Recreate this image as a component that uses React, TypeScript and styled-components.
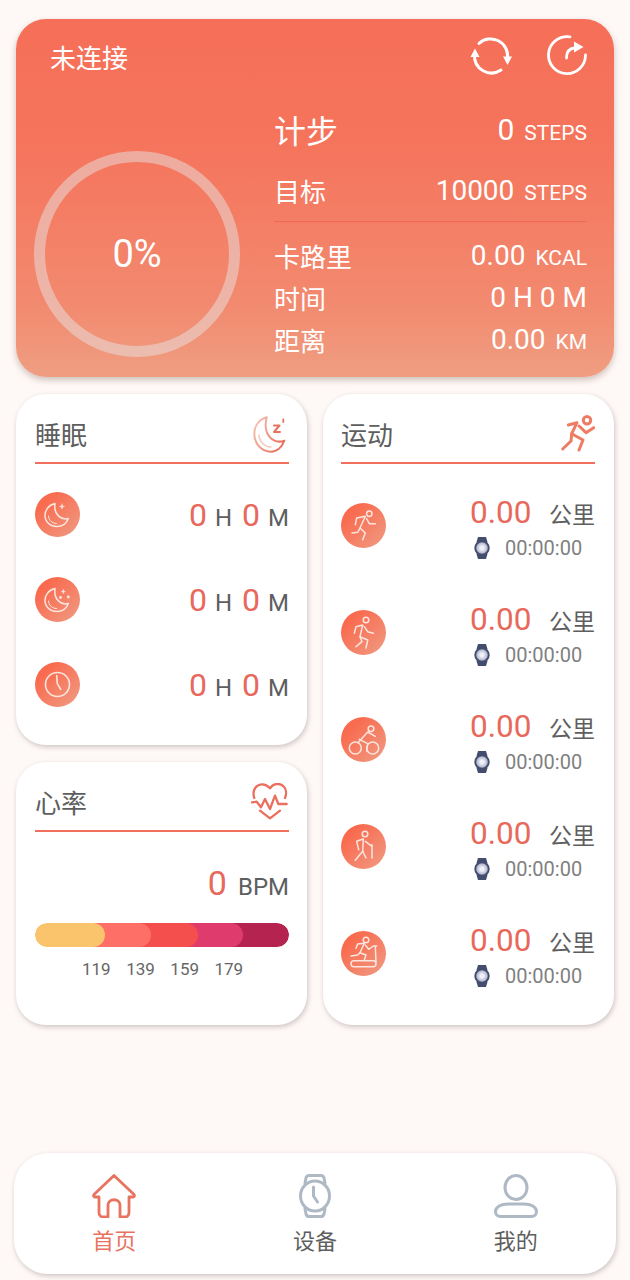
import React from "react";
import styled, { createGlobalStyle } from "styled-components";

const Global = createGlobalStyle`
  html, body { margin: 0; padding: 0; background: #fef8f6; }
  body { font-family: Roboto, "Noto Sans CJK SC", sans-serif; }
  * { box-sizing: border-box; }
`;

const Page = styled.div`
  width: 630px;
  height: 1280px;
  padding: 19px 16px 6px 16px;
  display: flex;
  flex-direction: column;
  background: #fef8f6;
`;

const Hero = styled.section`
  height: 358px;
  border-radius: 30px;
  padding: 16px 27px 0 18px;
  background: linear-gradient(180deg, #f66f58 0%, #f5745c 35%, #f28a6f 80%, #ef9e82 100%);
  box-shadow: 0 3px 6px rgba(120, 90, 80, 0.35);
  color: #fff;
  display: flex;
  flex-direction: column;
`;

const HeroTop = styled.div`
  height: 42px;
  padding-left: 16px;
  display: flex;
  align-items: center;
  justify-content: space-between;
  font-size: 26px;
`;

const HeroIcons = styled.div`
  display: flex;
  gap: 33px;
  margin-right: -1px;
`;

const HeroBody = styled.div`
  flex: 1;
  display: flex;
`;

const RingWrap = styled.div`
  width: 206px;
  height: 206px;
  margin-top: 74px;
  flex: none;
  display: flex;
  align-items: center;
  justify-content: center;
  font-size: 38px;
  border-radius: 50%;
  border: 11px solid rgba(232, 226, 226, 0.5);
`;

const Info = styled.div`
  flex: 1;
  margin-left: 34px;
  padding-top: 24px;
  display: flex;
  flex-direction: column;
`;

const InfoRow = styled.div<{ $h: number; $label: number; $num: number; $mt?: number }>`
  height: ${(p) => p.$h}px;
  margin-top: ${(p) => p.$mt ?? 0}px;
  display: flex;
  align-items: center;
  justify-content: space-between;
  font-size: ${(p) => p.$label}px;
  b {
    font-weight: 400;
    font-size: ${(p) => p.$num}px;
  }
`;

const Unit = styled.span`
  display: inline-block;
  margin-left: 10px;
  font-size: 21px;
  text-transform: uppercase;
`;

const Divider = styled.div`
  height: 1px;
  margin: 1px 0 12px;
  background: #ef6a55;
`;

const Columns = styled.div`
  display: flex;
  gap: 16px;
  margin-top: 17px;
`;

const Stack = styled.div`
  width: 291px;
  display: flex;
  flex-direction: column;
  gap: 17px;
`;

const Card = styled.section<{ $h: number; $left: number; $right: number }>`
  width: 291px;
  height: ${(p) => p.$h}px;
  border-radius: 30px;
  padding: 19px ${(p) => p.$right}px 0 ${(p) => p.$left}px;
  background: #fff;
  box-shadow: 1px 2px 5px rgba(90, 80, 80, 0.3);
`;

const CardHead = styled.div`
  height: 51px;
  display: flex;
  align-items: center;
  justify-content: space-between;
  border-bottom: 2px solid #f0705c;
  font-size: 26px;
  color: #5e5e5e;
  padding-bottom: 8px;
`;

const SleepList = styled.div`
  padding-top: 8px;
`;

const SleepRow = styled.div`
  height: 85px;
  display: flex;
  align-items: center;
  justify-content: space-between;
`;

const Bubble = styled.div`
  width: 45px;
  height: 45px;
  flex: none;
  border-radius: 50%;
  background: linear-gradient(135deg, #f96a4e 20%, #ef9c84 100%);
  display: flex;
  align-items: center;
  justify-content: center;
`;

const Duration = styled.div`
  display: flex;
  align-items: baseline;
  color: #5e5e5e;
  font-size: 24px;
  i {
    font-style: normal;
    font-size: 32px;
    color: #e8695c;
  }
  span {
    margin: 0 10px 0 8px;
  }
  span:last-child {
    margin-right: 0;
  }
`;

const SportList = styled.div`
  padding-top: 8px;
`;

const SportRow = styled.div`
  height: 107px;
  display: flex;
  align-items: center;
  justify-content: space-between;
`;

const SportValue = styled.div`
  width: 125px;
  margin-top: 3px;
  display: flex;
  flex-direction: column;
`;

const Km = styled.div`
  height: 36px;
  display: flex;
  align-items: baseline;
  justify-content: space-between;
  color: #5e5e5e;
  font-size: 23px;
  i {
    font-style: normal;
    font-size: 31.500px;
    color: #e8695c;
  }
`;

const Elapsed = styled.div`
  margin: 5px 0 0 4px;
  height: 26px;
  display: flex;
  align-items: center;
  color: #808080;
  font-size: 20px;
  gap: 15px;
`;

const Bpm = styled.div`
  margin-top: 31px;
  height: 44px;
  display: flex;
  justify-content: flex-end;
  align-items: baseline;
  color: #5e5e5e;
  font-size: 24px;
  i {
    font-style: normal;
    font-size: 34px;
    color: #e8695c;
    margin-right: 11px;
  }
`;

const Zones = styled.div`
  margin-top: 16px;
  height: 24px;
  display: flex;
  border-radius: 12px;
  overflow: hidden;
`;

const Zone = styled.div<{ $c: string; $w: number; $z: number }>`
  width: ${(p) => p.$w}px;
  background: ${(p) => p.$c};
  border-radius: 12px;
  margin-left: -24px;
  position: relative;
  z-index: ${(p) => p.$z};
  &:first-child {
    margin-left: 0;
  }
`;

const ZoneLabels = styled.div`
  margin-top: 12px;
  padding-left: 47px;
  display: flex;
  gap: 15.500px;
  color: #666;
  font-size: 17px;
  line-height: 20px;
`;

const TabBar = styled.nav`
  margin: auto -2px 0;
  height: 121px;
  border-radius: 34px;
  background: #fff;
  box-shadow: 1px 2px 5px rgba(90, 80, 80, 0.3);
  display: grid;
  grid-template-columns: repeat(3, 1fr);
`;

const Tab = styled.div<{ $on?: boolean }>`
  display: flex;
  flex-direction: column;
  align-items: center;
  padding-top: 21px;
  gap: 8px;
  font-size: 22px;
  line-height: 32px;
  color: ${(p) => (p.$on ? "#e8735f" : "#5e5e5e")};
`;

const W = "#fbe6df";

const Sync = () => (
  <svg width="44" height="44" viewBox="0 0 44 44" fill="none" stroke="#fff" strokeWidth="3" strokeLinecap="round">
    <path d="M5.500 21A17 17 0 0 0 32 36" />
    <path d="M10 9.500A17 17 0 0 1 38.500 24" />
    <path d="M1.500 23h9L6 14.500z" fill="#fff" stroke="none" />
    <path d="M34 22.500h9L38.500 31z" fill="#fff" stroke="none" />
  </svg>
);

const Redo = () => (
  <svg width="42" height="42" viewBox="0 0 42 42" fill="none" stroke="#fff" strokeWidth="2.800" strokeLinecap="round">
    <path d="M24 2.800A18.500 18.500 0 1 0 39.500 21" />
    <path d="M20.500 24c0-6 3-9.500 8-10" />
    <path d="M28 7.500l9.500 5.500-9.500 5.500z" fill="#fff" stroke="none" />
  </svg>
);

const MoonZ = () => (
  <svg width="36" height="38" viewBox="0 0 36 38" fill="none" strokeLinecap="round" strokeLinejoin="round">
    <defs>
      <linearGradient id="moonz" x1="0" y1="0" x2="1" y2="0.600">
        <stop offset="0" stopColor="#f6c8b8" />
        <stop offset="1" stopColor="#e8705c" />
      </linearGradient>
    </defs>
    <path d="M13.700 2.300C5 5 1.300 12 1.300 19c0 10 7.700 17.700 16.700 17.700 6 0 11-4.700 13.300-11C22 29 9 22 13.700 2.300z" stroke="url(#moonz)" strokeWidth="2" />
    <path d="M6 20c0 6 5.500 12 12 12" stroke="#f6c8b8" strokeWidth="1.500" />
    <path d="M21 10.500h5.500L21 17h6" stroke="#e8735f" strokeWidth="2" />
    <path d="M30.300 4.500v2.500" stroke="#e8735f" strokeWidth="1.800" />
  </svg>
);

const Runner = () => (
  <svg width="36" height="37" viewBox="0 0 36 37" fill="none" stroke="#ee7c63" strokeWidth="3" strokeLinecap="round" strokeLinejoin="round">
    <circle cx="28" cy="5.300" r="3.700" />
    <path d="M9.300 10L18 7.700l-5.300 11L24 25l-4 10" />
    <path d="M12.700 18.700L12 26 3.700 34" />
    <path d="M20 11l7 6.700 7.700-5" />
  </svg>
);

const HeartIcon = () => (
  <svg width="38" height="37" viewBox="-1 -1 38 37" fill="none" stroke="#ea6f5c" strokeWidth="2.300" strokeLinecap="round" strokeLinejoin="round">
    <path d="M2.300 14C.5 9 2 3.500 6 1.500 10.500-.8 15 1 18 4.300 21-.5 27-1 30.500 1.500 34 4 35 9 33 14" />
    <path d="M0 18.300l4.700-.6L9 23.300 13 15l5 10 5-13.300L26.300 20h8.400" />
    <path d="M8 26.700l10 7.600 10-7.600" />
  </svg>
);

const Icon = ({ children }: { children: React.ReactNode }) => (
  <svg width="45" height="45" viewBox="0 0 45 45" fill="none" stroke={W} strokeWidth="1.500" strokeLinecap="round" strokeLinejoin="round">
    {children}
  </svg>
);

const moonPath = "M20 11.500C13 13 10 19 10 23.500 10 30 15.500 34.500 22 34.500c5 0 9.500-3 11.300-8-7 2-15-4-13.300-15z";

const Moon1 = () => (
  <Icon>
    <path d={moonPath} />
    <path d="M13.500 24c0 4 3.500 7.500 8 7.500" strokeWidth="1" />
    <path d="M27 12l.6 1.900 1.900.6-1.900.6-.6 1.900-.6-1.900-1.900-.6 1.900-.6z" fill={W} strokeWidth=".5" />
  </Icon>
);

const Moon2 = () => (
  <Icon>
    <path d={moonPath} />
    <path d="M13.500 24c0 4 3.500 7.500 8 7.500" strokeWidth="1" />
    <path d="M28.300 12.500l.5 1.600 1.600.5-1.600.5-.5 1.600-.5-1.600-1.600-.5 1.600-.5z" fill={W} strokeWidth=".5" />
    <circle cx="33.300" cy="20" r=".7" fill={W} />
    <circle cx="25.500" cy="20.500" r=".7" fill={W} />
  </Icon>
);

const ClockIco = () => (
  <Icon>
    <circle cx="22.500" cy="22.500" r="12" strokeWidth="1.600" />
    <path d="M21.700 13.500l.6 8.200 3.400 5.600" strokeWidth="1.600" />
  </Icon>
);

const Run = () => (
  <Icon>
    <circle cx="28.300" cy="10.700" r="2.700" />
    <path d="M14.300 21.700L15.700 15l8.600-1.700L19 25l-2.300 4.300L11 30" />
    <path d="M19 25l5.300 5-2.600 6.700" />
    <path d="M25.500 15.500l2.800 5.200h6" />
  </Icon>
);

const Walk = () => (
  <Icon>
    <circle cx="25" cy="10" r="2.800" />
    <path d="M13.300 23.300L15 16.700l6.700-1.700L19 26.700l7.700 3.300-1.700 8" />
    <path d="M23.300 16.700l3.400 5 5.600 1.600" />
    <path d="M19 26.700l2 5-6 5" />
  </Icon>
);

const Bike = () => (
  <Icon>
    <circle cx="14.300" cy="31" r="6" />
    <circle cx="31.700" cy="31" r="6" />
    <circle cx="30" cy="11.700" r="2.800" />
    <path d="M17.700 25l9-10 7.600 4.300" />
    <path d="M18.300 22.300l8.400 4.400-1 7.300" />
  </Icon>
);

const Hike = () => (
  <Icon>
    <circle cx="24" cy="10" r="2.800" />
    <path d="M17.700 25.700l-2-8.400 6.600-2.300-.6 12.300-7.400 9" />
    <path d="M21.700 27.300L25 34" />
    <path d="M24.300 17.300l6.700 5" />
    <path d="M31 20.700V34" />
  </Icon>
);

const Tread = () => (
  <Icon>
    <circle cx="25" cy="9" r="2.800" />
    <path d="M15 17.300L16.700 13l6.600-.7L19 21.700l6 2.300-1.700 5" />
    <path d="M19 21.700L16.700 24 10 25" />
    <path d="M24.300 14l3.400 4.300 4.600-3.300h3.400" />
    <path d="M34.300 15.700L35 31" />
    <rect x="10" y="29.700" width="25" height="6" rx="3" />
  </Icon>
);

const WatchSmall = () => (
  <svg width="16" height="22" viewBox="0 0 16 22">
    <defs>
      <radialGradient id="wface">
        <stop offset="0.300" stopColor="#f0f1f8" />
        <stop offset="1" stopColor="#a9aec6" />
      </radialGradient>
    </defs>
    <path d="M4 0h8l1.500 5h-11zM2.500 17h11L12 22H4z" fill="#434d6e" />
    <circle cx="8" cy="11" r="7.700" fill="#434d6e" />
    <circle cx="8" cy="11" r="5.800" fill="url(#wface)" />
  </svg>
);

const HomeIco = () => (
  <svg width="44" height="44" viewBox="0 0 44 44" fill="none" stroke="#e8735f" strokeWidth="2.800" strokeLinejoin="round" strokeLinecap="round">
    <path d="M22 1.500L2 20.500c-1 1.500 0 2.500 1.500 2.500H7v15.500c0 3 2 4.500 4 4.500h5V31c0-7 12-7 12 0v12h5c2 0 4-1.500 4-4.500V23h3.500c1.500 0 2.500-1 1.500-2.500z" />
  </svg>
);

const WatchIco = () => (
  <svg width="44" height="44" viewBox="0 0 44 44" fill="none" stroke="#aeb9c5" strokeWidth="3" strokeLinecap="round" strokeLinejoin="round">
    <path d="M12 9l1-5c.4-1.500 1.500-2.500 3-2.500h12c1.500 0 2.600 1 3 2.500l1 5" />
    <path d="M12 35l1 5c.4 1.500 1.500 2.500 3 2.500h12c1.500 0 2.600-1 3-2.500l1-5" />
    <ellipse cx="22" cy="22" rx="14.500" ry="15" />
    <path d="M20.500 13v9l4 6" />
  </svg>
);

const UserIco = () => (
  <svg width="44" height="44" viewBox="0 0 44 44" fill="none" stroke="#aeb9c5" strokeWidth="3" strokeLinecap="round" strokeLinejoin="round">
    <ellipse cx="22" cy="13.500" rx="11" ry="12" />
    <path d="M14 30h16c7 0 12.500 3 12.500 7.500 0 3-2 5-5 5H6.500c-3 0-5-2-5-5C1.500 33 7 30 14 30z" />
  </svg>
);

const sleepIcons = [Moon1, Moon2, ClockIco];
const sportIcons = [Run, Walk, Bike, Hike, Tread];
const zones = [
  { c: "#f9c46b", w: 70 },
  { c: "#fe6f68", w: 70 },
  { c: "#f44f4d", w: 71 },
  { c: "#df3c6d", w: 69 },
  { c: "#b52350", w: 70 },
];

export default function App() {
  return (
    <Page>
      <Global />
      <Hero>
        <HeroTop>
          <span>未连接</span>
          <HeroIcons>
            <Sync />
            <Redo />
          </HeroIcons>
        </HeroTop>
        <HeroBody>
          <RingWrap>0%</RingWrap>
          <Info>
            <InfoRow $h={56} $label={32} $num={30}>
              <span>计步</span>
              <span><b>0</b><Unit>steps</Unit></span>
            </InfoRow>
            <InfoRow $h={60} $mt={3} $label={26} $num={28}>
              <span>目标</span>
              <span><b>10000</b><Unit>steps</Unit></span>
            </InfoRow>
            <Divider />
            <InfoRow $h={42} $label={26} $num={28}>
              <span>卡路里</span>
              <span><b>0.00</b><Unit>kcal</Unit></span>
            </InfoRow>
            <InfoRow $h={42} $label={26} $num={28}>
              <span>时间</span>
              <span><b>0 H 0 M</b></span>
            </InfoRow>
            <InfoRow $h={42} $label={26} $num={28}>
              <span>距离</span>
              <span><b>0.00</b><Unit>km</Unit></span>
            </InfoRow>
          </Info>
        </HeroBody>
      </Hero>
      <Columns>
        <Stack>
          <Card $h={351} $left={19} $right={18}>
            <CardHead>
              <span>睡眠</span>
              <MoonZ />
            </CardHead>
            <SleepList>
              {sleepIcons.map((I, k) => (
                <SleepRow key={k}>
                  <Bubble><I /></Bubble>
                  <Duration>
                    <i>0</i><span>H</span><i>0</i><span>M</span>
                  </Duration>
                </SleepRow>
              ))}
            </SleepList>
          </Card>
          <Card $h={263} $left={19} $right={18}>
            <CardHead>
              <span>心率</span>
              <HeartIcon />
            </CardHead>
            <Bpm><i>0</i>BPM</Bpm>
            <Zones>
              {zones.map((z, k) => (
                <Zone key={k} $c={z.c} $w={z.w} $z={5 - k} />
              ))}
            </Zones>
            <ZoneLabels>
              <span>119</span><span>139</span><span>159</span><span>179</span>
            </ZoneLabels>
          </Card>
        </Stack>
        <Card $h={631} $left={18} $right={19}>
          <CardHead>
            <span>运动</span>
            <Runner />
          </CardHead>
          <SportList>
            {sportIcons.map((I, k) => (
              <SportRow key={k}>
                <Bubble><I /></Bubble>
                <SportValue>
                  <Km><i>0.00</i>公里</Km>
                  <Elapsed><WatchSmall />00:00:00</Elapsed>
                </SportValue>
              </SportRow>
            ))}
          </SportList>
        </Card>
      </Columns>
      <TabBar>
        <Tab $on><HomeIco />首页</Tab>
        <Tab><WatchIco />设备</Tab>
        <Tab><UserIco />我的</Tab>
      </TabBar>
    </Page>
  );
}
